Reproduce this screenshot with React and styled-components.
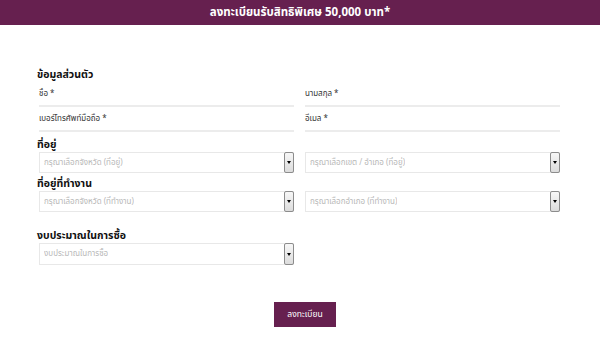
import React from "react";
import styled, { createGlobalStyle } from "styled-components";

const Global = createGlobalStyle`
  html, body { margin: 0; padding: 0; background: #fff; }
  body { font-family: "Noto Sans Thai", "Noto Sans", "Liberation Sans", sans-serif; }
  * { box-sizing: border-box; }
`;

const Page = styled.div`
  width: 600px;
  height: 339px;
  background: #fff;
`;

const Header = styled.div`
  height: 25px;
  background: #66204f;
  color: #fff;
  font-weight: 700;
  font-size: 11.5px;
  display: flex;
  align-items: center;
  justify-content: center;
`;

const Form = styled.form`
  width: 523px;
  margin: 0 0 0 37px;
  padding-top: 43px;
  display: flex;
  flex-direction: column;
`;

const Heading = styled.div`
  font-size: 10.5px;
  font-weight: 700;
  color: #111;
  height: 14px;
  line-height: 14px;
  margin-top: ${(p) => p.$mt || 0}px;
`;

const Grid = styled.div`
  display: grid;
  grid-template-columns: 1fr 1fr;
  column-gap: 11px;
  padding-left: 2px;
  margin-top: ${(p) => p.$mt || 0}px;
`;

const TextField = styled.div`
  height: 25px;
  display: flex;
  align-items: center;
  padding-top: 1px;
  font-size: 8px;
  color: #333;
  border-bottom: 2px solid #ececec;
`;

const Select = styled.div`
  height: ${(p) => p.$h || 21}px;
  border: 1px solid #e8e8e8;
  display: flex;
  align-items: center;
  justify-content: space-between;
  padding-left: 4px;
  font-size: 8px;
  color: #b8b8b8;
`;

const Arrow = styled.span`
  width: 10px;
  height: calc(100% + 2px);
  margin-right: -1px;
  border: 1px solid #8c8c8c;
  border-radius: 2px;
  background: linear-gradient(#f7f7f7, #dcdcdc);
  display: flex;
  align-items: center;
  justify-content: center;
  &::after {
    content: "";
    width: 0;
    height: 0;
    border-left: 2px solid transparent;
    border-right: 2px solid transparent;
    border-top: 3px solid #000;
  }
`;

const ButtonRow = styled.div`
  display: flex;
  justify-content: center;
  margin-top: 37px;
  padding-left: 13px;
`;

const Submit = styled.button`
  width: 62px;
  height: 25px;
  border: none;
  background: #66204f;
  color: #fff;
  font-family: inherit;
  font-size: 8.5px;
  padding: 0;
  cursor: pointer;
`;

const Placeholder = styled.span`
  white-space: nowrap;
  overflow: hidden;
`;

function SelectBox({ text, h }) {
  return (
    <Select $h={h}>
      <Placeholder>{text}</Placeholder>
      <Arrow />
    </Select>
  );
}

export default function App() {
  return (
    <Page>
      <Global />
      <Header>ลงทะเบียนรับสิทธิพิเศษ 50,000 บาท*</Header>
      <Form onSubmit={(e) => e.preventDefault()}>
        <Heading>ข้อมูลส่วนตัว</Heading>
        <Grid>
          <TextField>ชื่อ *</TextField>
          <TextField>นามสกุล *</TextField>
          <TextField>เบอร์โทรศัพท์มือถือ *</TextField>
          <TextField>อีเมล *</TextField>
        </Grid>
        <Heading $mt={6}>ที่อยู่</Heading>
        <Grid>
          <SelectBox text="กรุณาเลือกจังหวัด (ที่อยู่)" />
          <SelectBox text="กรุณาเลือกเขต / อำเภอ (ที่อยู่)" />
        </Grid>
        <Heading $mt={4}>ที่อยู่ที่ทำงาน</Heading>
        <Grid>
          <SelectBox text="กรุณาเลือกจังหวัด (ที่ทำงาน)" />
          <SelectBox text="กรุณาเลือกอำเภอ (ที่ทำงาน)" />
        </Grid>
        <Heading $mt={17}>งบประมาณในการซื้อ</Heading>
        <Grid>
          <SelectBox text="งบประมาณในการซื้อ" h={22} />
        </Grid>
        <ButtonRow>
          <Submit type="submit">ลงทะเบียน</Submit>
        </ButtonRow>
      </Form>
    </Page>
  );
}
